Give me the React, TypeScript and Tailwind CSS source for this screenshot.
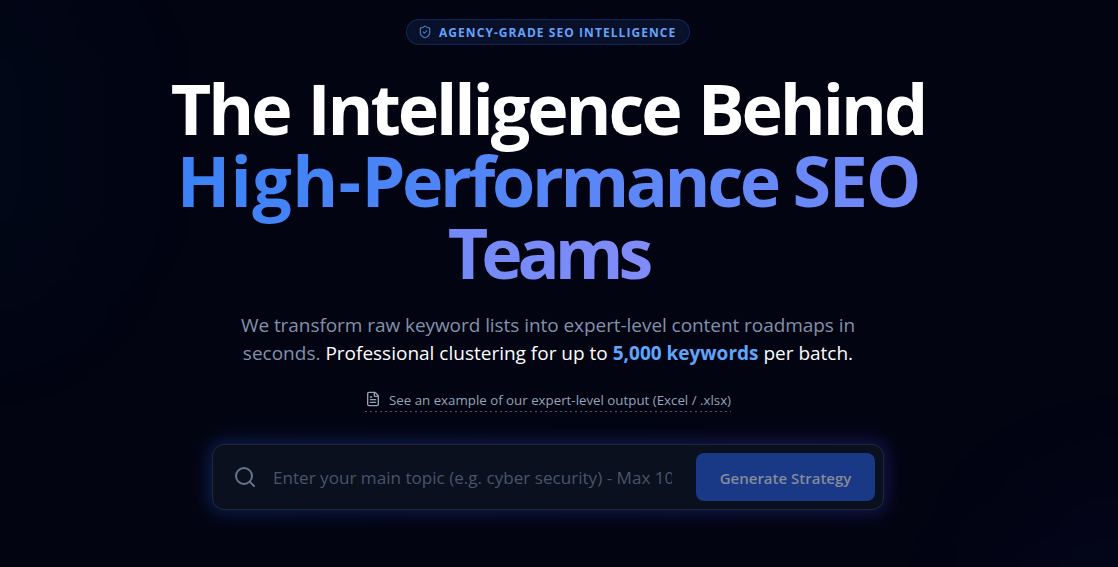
import { FileText, Search, ShieldCheck } from "lucide-react";

function Badge() {
  return (
    <div className="flex h-[26px] w-[284px] items-center whitespace-nowrap rounded-full border border-blue-500/20 bg-[#08102a] pl-[11px] text-xs font-bold uppercase tracking-[1.06px] text-[#60a5fa]">
      <ShieldCheck size={14} className="mr-[7px] shrink-0 opacity-70" />
      <span className="pt-px">Agency-Grade SEO Intelligence</span>
    </div>
  );
}

function SearchBar() {
  return (
    <div className="relative w-[672px]">
      {/* soft glow behind the bar */}
      <div className="absolute -inset-1 rounded-2xl bg-linear-to-r from-[#2563eb] to-[#4f46e5] opacity-25 blur-sm" />
      <div className="relative flex h-[66px] items-center rounded-xl border border-[#1e293b] bg-[#0b101f] p-2">
        <Search size={24} className="ml-3 shrink-0 text-[#64748b]" />
        <input
          className="ml-4 w-[399px] bg-transparent pt-0.5 text-[17.1px] text-slate-300 outline-none placeholder:text-[#475569]"
          placeholder="Enter your main topic (e.g. cyber security) - Max 100 chars"
        />
        <button className="ml-auto h-12 w-[179px] whitespace-nowrap rounded-lg bg-[#193885] pt-0.5 text-[15px] font-semibold text-[#858b9b]">
          Generate Strategy
        </button>
      </div>
    </div>
  );
}

export default function App() {
  return (
    <div className="relative h-[567px] overflow-hidden bg-[#020412] pr-[22px] font-['Open_Sans',sans-serif]">
      <div className="absolute -left-[130px] -top-[40px] h-[360px] w-[220px] rounded-full bg-[#0369a1]/4 blur-3xl" />
      <div className="absolute -bottom-[140px] -right-[120px] h-[220px] w-[240px] rounded-full bg-indigo-600/4 blur-3xl" />
      <main className="relative flex flex-col items-center pt-[19px]">
        <Badge />
        <h1 className="mt-[27px] w-[800px] text-center text-[70px] font-bold leading-[72px] tracking-[-3.1px] text-white">
          <span className="whitespace-nowrap [word-spacing:3px]">The Intelligence Behind</span>
          <br />
          <span className="-mr-1.5 bg-[linear-gradient(to_right,#3b82f6,#818cf8)] bg-clip-text pr-1.5 tracking-[-2.25px] text-transparent">
            <span className="tracking-[0.35px]">High-</span>
            <span className="tracking-[-3.4px]">Performance </span>
            SEO
            <br />
            <span className="tracking-[-7px]">T</span>
            <span className="tracking-[-5px]">eams</span>
          </span>
        </h1>
        <p className="mt-[23px] whitespace-nowrap text-center text-[19px] leading-7 text-[#8291a9]">
          <span className="tracking-[-0.06px]">We transform raw keyword lists into expert-level content roadmaps in</span>
          <br />
          <span>
            seconds.{" "}
            <span className="text-white">
              Professional clustering for up to <span className="font-bold text-[#60a5fa]">5,000 keywords</span> per batch.
            </span>
          </span>
        </p>
        <a className="mt-[22px] flex h-[23px] items-center whitespace-nowrap bg-[repeating-linear-gradient(to_right,#475569_0_2px,transparent_2px_5px)] bg-[length:100%_1px] bg-bottom bg-no-repeat text-[13.3px] text-[#94a3b8]">
          <FileText size={16} className="mb-1 mr-2 shrink-0" />
          <span>See an example of our expert-level output (Excel / .xlsx)</span>
        </a>
        <div className="mt-8">
          <SearchBar />
        </div>
      </main>
    </div>
  );
}
